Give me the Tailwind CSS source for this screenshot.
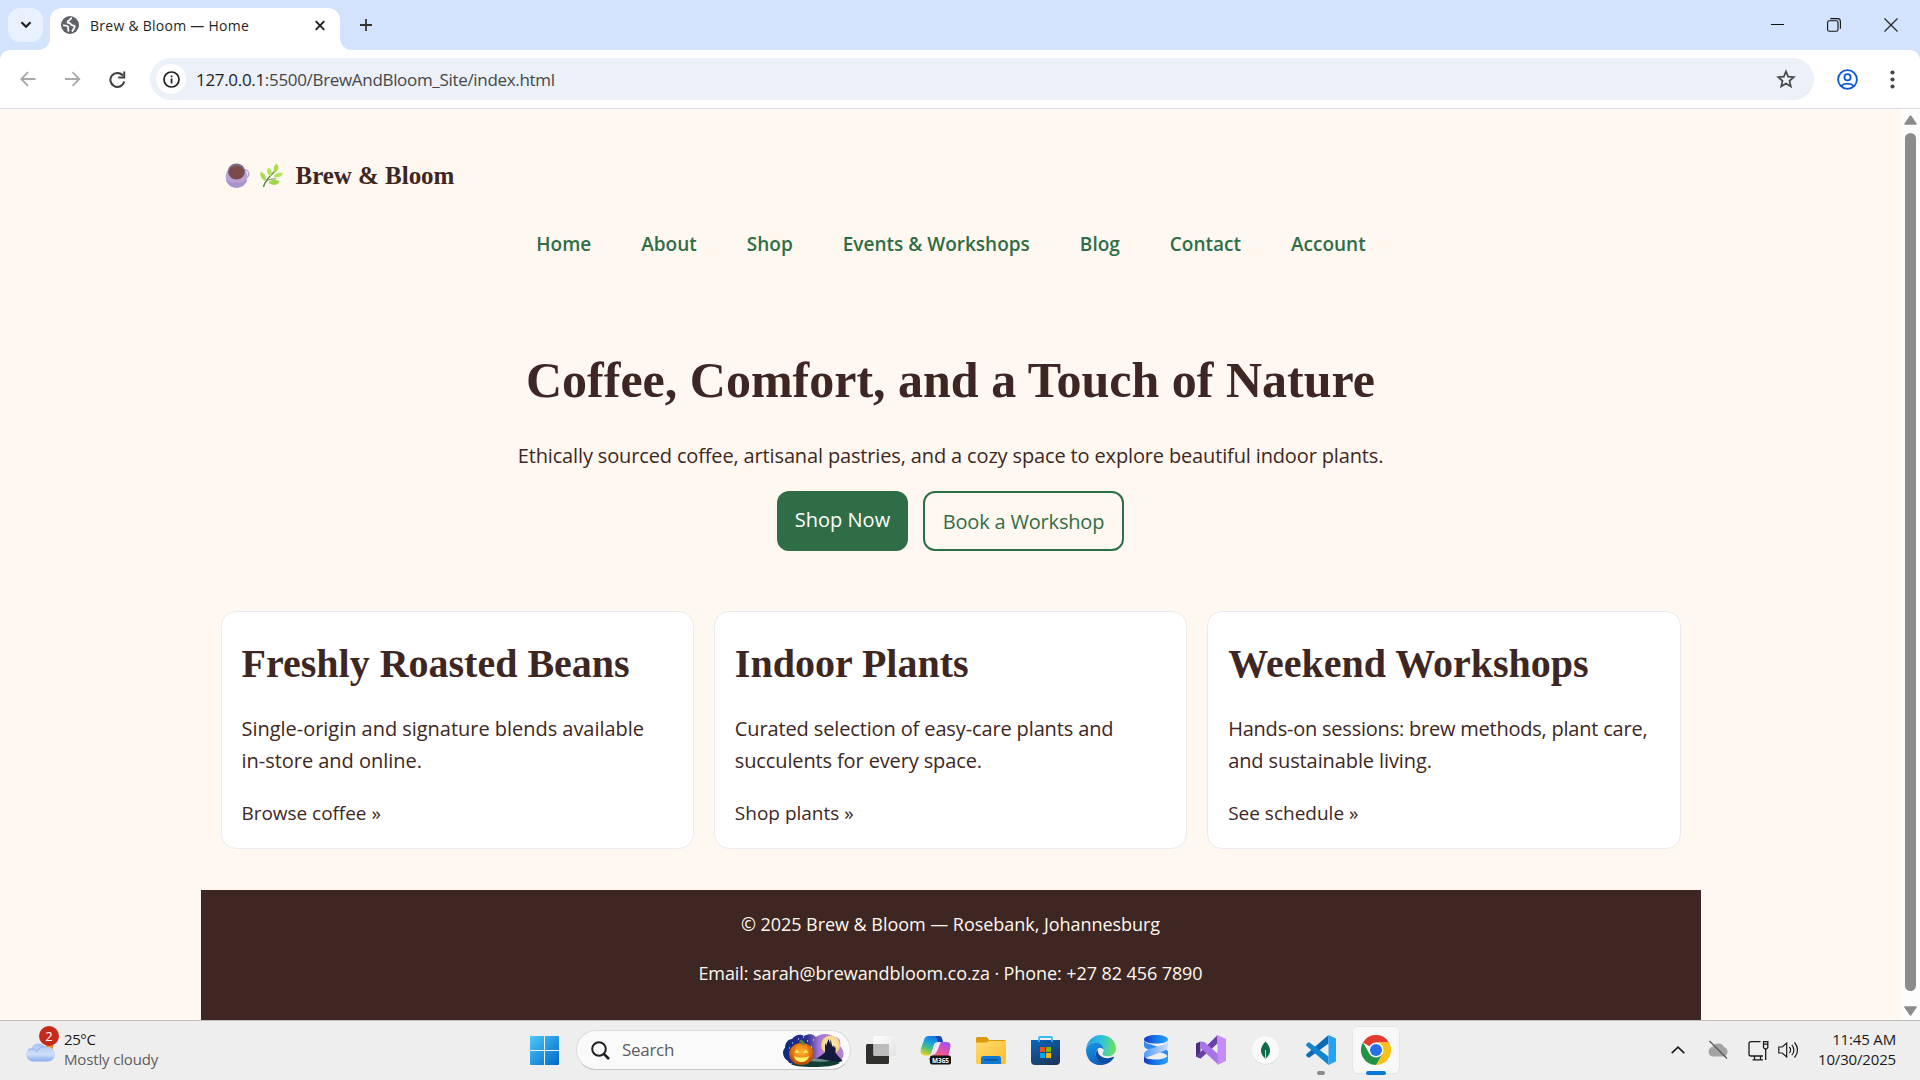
<!DOCTYPE html>
<html lang="en">
<head>
<meta charset="utf-8">
<title>Brew &amp; Bloom — Home</title>
<script src="https://cdn.jsdelivr.net/npm/@tailwindcss/browser@4"></script>
</head>
<body class="h-[1080px] w-[1920px] overflow-hidden flex flex-col bg-[#fff8f0] font-['Open_Sans','Noto_Sans',sans-serif] text-[#3e2723]">

<!-- Tab strip -->
<div class="h-[50px] shrink-0 bg-[#d3e3fd] flex items-end">
  <button class="ml-2 mb-2 w-[35px] h-[34px] rounded-xl bg-[#e9f1fe] flex items-center justify-center">
    <svg width="12" height="8" viewBox="0 0 12 8" fill="none" stroke="#1f1f1f" stroke-width="2.2"><path d="M1.5 1.3 6 5.8l4.500-4.500"/></svg>
  </button>
  <div class="relative ml-[7px] w-[290px] h-[42px] rounded-t-xl bg-white flex items-center pl-[11px] pr-[15px] pb-[1px]">
    <svg class="absolute -left-3 bottom-0" width="12" height="12" viewBox="0 0 12 12"><path d="M12 0v12H0A12 12 0 0 0 12 0" fill="#fff"/></svg>
    <svg class="absolute -right-3 bottom-0" width="12" height="12" viewBox="0 0 12 12"><path d="M0 0v12h12A12 12 0 0 1 0 0" fill="#fff"/></svg>
    <svg class="mt-[-7px]" width="18" height="18" viewBox="0 0 18 18"><circle cx="9" cy="9" r="9" fill="#5f6368"/><path d="M11 2.200C8.500 2.300 9.600 4.300 7.800 4.600 6.200 4.900 6.200 6.800 8 7c2.400.3 1.500 2.400 3.600 2.400 2.200 0 2.700 1.300 1.500 2.800-.9 1.200-.9 2.400-2.300 3.200M2 9.300c2-.1 4.200.1 5 1.200.8 1.200-.6 1.700.2 2.700.7.900.3 1.500-.2 2.200" fill="none" stroke="#fff" stroke-width="1.800"/></svg>
    <span class="ml-[11px] mt-[-5px] text-[14px] leading-5 tracking-[.26px] text-[#1f1f1f] whitespace-nowrap">Brew &amp; Bloom — Home</span>
    <svg class="ml-auto mt-[-7px]" width="10" height="11" viewBox="0 0 10 11" stroke="#1f1f1f" stroke-width="1.900"><path d="m.7 1.200 8.600 8.600m0-8.600L.7 9.800"/></svg>
  </div>
  <svg class="ml-5 mb-[19px]" width="12" height="12" viewBox="0 0 12 12" stroke="#333" stroke-width="1.800"><path d="M6 0v12M0 6h12"/></svg>
  <div class="ml-auto mr-[22px] mb-[18px] flex items-center gap-[43px]">
    <svg class="-mr-[1px]" width="14" height="14" viewBox="0 0 14 14" stroke="#111" stroke-width="1"><path d="M0 6.500h13"/></svg>
    <svg width="14" height="14" viewBox="0 0 14 14" fill="none" stroke="#111" stroke-width="1.100"><rect x=".6" y="2.800" width="10.400" height="10.400" rx="1.800"/><path d="M3.300.6h7.200a2.900 2.900 0 0 1 2.900 2.900v7.200"/></svg>
    <svg width="14" height="14" viewBox="0 0 14 14" stroke="#222" stroke-width="1.200"><path d="m.5.5 13 13m0-13-13 13"/></svg>
  </div>
</div>

<!-- Toolbar -->
<div class="h-[59px] shrink-0 bg-[#d3e3fd]">
<div class="h-full rounded-t-[10px] bg-white border-b border-[#dcdee3] flex items-center">
  <svg class="ml-5" width="16" height="16" viewBox="0 0 16 16" fill="none" stroke="#a9a9a9" stroke-width="1.800"><path d="M15.500 8H1.500M8 1.200 1.300 8 8 14.800"/></svg>
  <svg class="ml-[29px]" width="16" height="16" viewBox="0 0 16 16" fill="none" stroke="#a9a9a9" stroke-width="1.800"><path d="M0 8h14M7.500 1.200 14.300 8l-6.800 6.800"/></svg>
  <svg class="ml-7" width="17" height="17" viewBox="0 0 17 17"><path d="M14 4.700A7 7 0 1 0 15.200 10.500" fill="none" stroke="#3c3c3c" stroke-width="2"/><path d="M16.200.5v6.900H9.300V5.500h5V.5z" fill="#3c3c3c"/></svg>
  <div class="ml-6 w-[1664px] h-[42px] rounded-full bg-[#ebf0f9] flex items-center pl-[6px] pr-[18px]">
    <span class="w-[30px] h-[30px] rounded-full bg-white flex items-center justify-center">
      <svg width="17" height="17" viewBox="0 0 17 17"><circle cx="8.500" cy="8.500" r="7.500" fill="none" stroke="#1f1f1f" stroke-width="1.700"/><path d="M7.700 7.500h1.700v5H7.700zm0-3h1.700v1.700H7.700z" fill="#1f1f1f"/></svg>
    </span>
    <span class="ml-[10px] mt-[2px] text-[17px] tracking-[-.32px] leading-6 text-[#474747] whitespace-nowrap"><span class="text-[#1f1f1f]">127.0.0.1</span>:5500/BrewAndBloom_Site/index.html</span>
    <svg class="ml-auto" width="20" height="20" viewBox="0 0 20 20"><path d="m10 2.500 2.200 5.200 5.600.5-4.300 3.700 1.300 5.500-4.800-2.900-4.800 2.900 1.300-5.500-4.300-3.700 5.600-.5z" fill="none" stroke="#474747" stroke-width="1.700"/></svg>
  </div>
  <svg class="ml-[23px]" width="21" height="21" viewBox="0 0 21 21" fill="none" stroke="#0b57d0" stroke-width="1.800"><circle cx="10.500" cy="10.500" r="9.400"/><circle cx="10.500" cy="8.300" r="3.100"/><path d="M4 17.100c3.300-3.300 9.700-3.300 13 0"/></svg>
  <svg class="ml-8" width="5" height="19" viewBox="0 0 5 19" fill="#474747"><circle cx="2.500" cy="2.500" r="2.100"/><circle cx="2.500" cy="9.500" r="2.100"/><circle cx="2.500" cy="16.500" r="2.100"/></svg>
</div>
</div>

<!-- Page viewport -->
<div class="h-[911px] shrink-0 flex">
  <div class="w-[1901px] flex justify-center overflow-hidden">
    <div class="w-[1500px]">
      <header class="px-5 pt-[47px]">
        <div class="h-10 flex items-center pl-1">
          <svg class="mb-[1px]" width="25" height="25" viewBox="0 0 25 25">
            <circle cx="19.500" cy="11" r="4.200" fill="none" stroke="#b9a6cd" stroke-width="1.600"/>
            <ellipse cx="11.500" cy="14" rx="10.800" ry="10.800" fill="#b7a2d2"/>
            <path d="M1 17c2 5.500 6 7.500 10.500 7.500S20.500 22.500 22 17c-5 4-16 4-21 0" fill="#a894c8"/>
            <ellipse cx="11.500" cy="8.300" rx="8.700" ry="7.900" fill="#7b6a8b"/>
            <ellipse cx="11.500" cy="9.600" rx="7.700" ry="6.900" fill="#7d4a4c"/>
          </svg>
          <svg class="ml-[10px] mb-[1px]" width="23" height="25" viewBox="0 0 24 25">
            <path d="M3.500 24.500C5 19 9 14 15.500 8" fill="none" stroke="#5b8a3c" stroke-width="1.500"/>
            <path d="M6.800 18c3-1.500 6-2 10-2" fill="none" stroke="#5b8a3c"/>
            <path d="M17.500 0c2.800 3.500 2 7-2 9.500-2.300-3.500-1.300-7 2-9.500" fill="#a8dc50"/>
            <path d="M8.500 4.200c4 1.800 4.800 5 2.500 9-3.800-2-4.500-5.500-2.500-9" fill="#b4e460"/>
            <path d="M.8 8.600c4.500 1.800 6 5 5 10C1.300 16.200-.5 13 .8 8.600" fill="#a8dc50"/>
            <path d="M24 10c-1 4.300-5 5.700-10 3.500C16 9.900 19.500 8.800 24 10" fill="#b4e460"/>
            <path d="M20.500 19c-2.500 4-7 4.200-11.500 1 2.800-3.600 7.500-4 11.500-1" fill="#9fd648"/>
          </svg>
          <span class="ml-[13px] font-['Liberation_Serif',serif] font-bold text-[25px] leading-10 tracking-[-.03px] whitespace-nowrap">Brew &amp; Bloom</span>
        </div>
        <nav class="mt-8 flex justify-center gap-[50px] pl-[1px] text-[19px] leading-8 font-semibold text-[#2f6d46] whitespace-nowrap">
          <a>Home</a><a>About</a><a>Shop</a><a>Events &amp; Workshops</a><a>Blog</a><a>Contact</a><a>Account</a>
        </nav>
      </header>
      <section class="mt-20 text-center">
        <h1 class="font-['Liberation_Serif',serif] font-bold text-[50px] leading-20">Coffee, Comfort, and a Touch of Nature</h1>
        <p class="mt-5 text-[20px] leading-8 tracking-[-.145px]">Ethically sourced coffee, artisanal pastries, and a cozy space to explore beautiful indoor plants.</p>
        <div class="mt-[19px] flex justify-center gap-[15px] text-[20px] leading-8 whitespace-nowrap">
          <a class="w-[131px] h-[60px] pt-[13px] rounded-xl bg-[#2f6d46] text-white">Shop Now</a>
          <a class="w-[201px] h-[60px] pt-[13px] rounded-xl border-2 border-[#2f6d46] text-[#2f6d46] tracking-[-.183px]">Book a Workshop</a>
        </div>
      </section>
      <section class="mt-[60px] px-5 grid grid-cols-3 gap-5">
        <article class="h-[238px] p-5 rounded-[15px] bg-white border border-[#e9ebee]">
          <h2 class="font-['Liberation_Serif',serif] font-bold text-[40px] leading-16">Freshly Roasted Beans</h2>
          <p class="mt-[17px] text-[20px] leading-8 tracking-[-.03px]">Single-origin and signature blends available<br>in-store and online.</p>
          <a class="mt-5 block text-[19px] leading-8 tracking-[-.04px]">Browse coffee »</a>
        </article>
        <article class="h-[238px] p-5 rounded-[15px] bg-white border border-[#e9ebee]">
          <h2 class="font-['Liberation_Serif',serif] font-bold text-[40px] leading-16">Indoor Plants</h2>
          <p class="mt-[17px] text-[20px] leading-8 tracking-[-.13px]">Curated selection of easy-care plants and<br>succulents for every space.</p>
          <a class="mt-5 block text-[19px] leading-8">Shop plants »</a>
        </article>
        <article class="h-[238px] p-5 rounded-[15px] bg-white border border-[#e9ebee]">
          <h2 class="font-['Liberation_Serif',serif] font-bold text-[40px] leading-16">Weekend Workshops</h2>
          <p class="mt-[17px] text-[20px] leading-8 tracking-[-.22px] whitespace-nowrap">Hands-on sessions: brew methods, plant care,<br><span class="tracking-[-.1px]">and sustainable living.</span></p>
          <a class="mt-5 block text-[19px] leading-8">See schedule »</a>
        </article>
      </section>
      <footer class="mt-[41px] h-[130px] pt-[19px] bg-[#3e2723] text-[#fff8f0] text-center text-[18px] leading-[30px]">
        <p class="tracking-[-.04px]">© 2025 Brew &amp; Bloom — Rosebank, Johannesburg</p>
        <p class="mt-[19px] tracking-[-.085px]">Email: sarah@brewandbloom.co.za · Phone: +27 82 456 7890</p>
      </footer>
    </div>
  </div>
  <div class="w-[19px] bg-[#fcfcfc] flex flex-col items-center">
    <svg class="mt-[6px]" width="13" height="10" viewBox="0 0 13 10"><path d="M6.500 1 12 9H1z" fill="#8b8b8b" stroke="#8b8b8b" stroke-width="1.500" stroke-linejoin="round"/></svg>
    <div class="mt-2 w-[11px] h-[858px] rounded-full bg-[#8b8b8b]"></div>
    <svg class="mt-[15px]" width="13" height="10" viewBox="0 0 13 10"><path d="M6.500 9 12 1H1z" fill="#8b8b8b" stroke="#8b8b8b" stroke-width="1.500" stroke-linejoin="round"/></svg>
  </div>
</div>

<!-- Taskbar -->
<div class="h-[60px] shrink-0 border-t border-[#bdbdbd] bg-[#eee] flex items-center pb-[1px]">
  <div class="w-[530px] flex items-center pl-[25px] text-[15px] leading-5">
    <div class="relative w-[30px] h-[22px] mt-[4px]">
      <svg width="30" height="22" viewBox="0 0 30 22">
        <defs><linearGradient id="cl" x1="0" y1="0" x2="0" y2="1"><stop stop-color="#a9c4f3"/><stop offset=".6" stop-color="#cfdff9"/><stop offset="1" stop-color="#86abec"/></linearGradient></defs>
        <rect x="21" y="1" width="7" height="9" rx="3" fill="#f58a1f"/>
        <path d="M8 20.500A8 7 0 0 1 6.500 7 8 8 0 0 1 20.500 6.500 7.200 7.200 0 1 1 23 20.500z" fill="url(#cl)"/>
        <path d="M3 9c4-2 7-1 9 1.500 2-4 6-5.500 10-4.500" fill="none" stroke="#9ab9ef" stroke-width="1.200"/>
      </svg>
      <span class="absolute left-[14px] -top-[15px] w-5 h-5 rounded-full bg-[#c42b1c] text-white text-[13px] leading-5 text-center">2</span>
    </div>
    <div class="ml-[9px] mb-[2px]">
      <div class="text-[#1b1b1b] tracking-[-.4px]">25°C</div>
      <div class="text-[#5d5d5d] tracking-[-.15px]">Mostly cloudy</div>
    </div>
  </div>
  <svg width="29" height="29" viewBox="0 0 29 29"><defs><linearGradient id="wn" x1="0" y1="0" x2="1" y2="1"><stop stop-color="#4cc9fb"/><stop offset="1" stop-color="#0067c8"/></linearGradient></defs><path d="M1 0h13v14H0V1a1 1 0 0 1 1-1m14 0h13a1 1 0 0 1 1 1v13H15zM0 15h14v14H1a1 1 0 0 1-1-1zm15 0h14v13a1 1 0 0 1-1 1H15z" fill="url(#wn)"/></svg>
  <div class="ml-[17px] w-[275px] h-[40px] rounded-full bg-[#fafafa] border border-[#dcdcdc] border-b-[#c4c4c4] flex items-center pl-[14px] pr-[5px]">
    <svg width="19" height="19" viewBox="0 0 19 19" fill="none" stroke="#1f1f1f" stroke-width="2"><circle cx="8" cy="8" r="6.800"/><path d="m12.800 12.800 5.200 5.200" stroke-width="2.600"/></svg>
    <span class="ml-[12px] text-[17px] tracking-[-.3px] leading-6 text-[#5d5d5d]">Search</span>
    <svg class="ml-auto" width="62" height="33" viewBox="0 0 62 33">
      <defs>
        <linearGradient id="sky"><stop stop-color="#0b2a7e"/><stop offset=".4" stop-color="#2b2f8f"/><stop offset=".6" stop-color="#a879d0"/><stop offset="1" stop-color="#b884d2"/></linearGradient>
        <radialGradient id="pk" cx=".5" cy=".4"><stop stop-color="#ffb52e"/><stop offset=".7" stop-color="#ee7f14"/><stop offset="1" stop-color="#b94d08"/></radialGradient>
        <radialGradient id="mn"><stop stop-color="#fff3c4"/><stop offset="1" stop-color="#f3cf86"/></radialGradient>
      </defs>
      <path d="M5 27C-1 24-1 16 2 14c0-5 3-9 7-9 4-5 9-5 12-3 5-3 10-2 12 1 5-4 13-4 18 0 6 0 7 5 6 9 4 4 5 10 1 14-2 3-5 2-6 3-10 4-32 4-41 1-3-1-5 0-6-3" fill="url(#sky)"/>
      <circle cx="47.500" cy="11" r="9.500" fill="url(#mn)"/>
      <path d="M33 25c4-3 8-5 9-7v-7l1-2 1 3v-3l1.500-4 1.500 4v2l.7-6 1.200 6 .6 2 .8-2 .8 3 .5-2 1 2v5c2 3 5 5 7 8-6 3-21 3-27.600-2" fill="#141a3c"/>
      <path d="M8 30c8-5 42-5 49-1-6 3-14 4-27 4-12 0-20-1-22-3" fill="#123f35"/>
      <path d="M27 25c5-1 13 0 20 2-6 1-13 1-20 0" fill="#6f8f92"/>
      <ellipse cx="18.500" cy="20" rx="12.500" ry="11" fill="url(#pk)"/>
      <path d="M13 11c-4 5-4 13 0 18m11-18c4 5 4 13 0 18" stroke="#d4660e" fill="none"/>
      <path d="M18 11c1-2 0-3-2-3l1-2c3 0 5 2 4 5z" fill="#5b8a34"/>
      <path d="m11 18.500 3-3 2.500 3.500zm14.500 0-3-3-2.500 3.500zM11 22c4 2 11 2 15 0-1 4-4 6-7.500 6S12 26 11 22" fill="#fff06a"/>
      <path d="M6 14h1M15 5h1M24 7h1M28 13h1M20 3h1M30 6h1M9 9h1" stroke="#fff"/>
    </svg>
  </div>
  <div class="ml-[2px] flex h-full items-center">
    <!-- Task view -->
    <div class="w-[55px] flex justify-center"><svg width="30" height="28" viewBox="0 0 30 28"><defs><linearGradient id="tv" x1="0" y1="0" x2="1" y2="1"><stop stop-color="#fff"/><stop offset="1" stop-color="#e2e2e2"/></linearGradient></defs><rect y="8" width="23" height="20" rx="1.500" fill="#30302e"/><rect x="7.500" width="22.500" height="20" rx="1.500" fill="url(#tv)"/><path d="M7.500 8H23v12H9a1.500 1.500 0 0 1-1.500-1.500z" fill="#bcbcbc"/></svg></div>
    <!-- Microsoft 365 Copilot -->
    <div class="w-[55px] flex justify-center"><svg width="31" height="30" viewBox="0 0 31 30">
      <defs><linearGradient id="c1" x1=".6" y1="0" x2=".2" y2="1"><stop stop-color="#1b6ee0"/><stop offset=".35" stop-color="#1aa3e0"/><stop offset=".65" stop-color="#4fc27a"/><stop offset="1" stop-color="#f2d21f"/></linearGradient><linearGradient id="c2" x1=".7" y1="0" x2=".3" y2="1"><stop stop-color="#a34fe8"/><stop offset=".5" stop-color="#f0569b"/><stop offset="1" stop-color="#ff9a4a"/></linearGradient></defs>
      <path d="M9 1h10c3 0 3 3 4 6h-5c-3 0-4 2-5 6l-2 6c-1 1-2 1.500-4 1.500-6 0-7-2-6-7L4 5c1-3 2-4 5-4" fill="url(#c1)"/>
      <path d="M15 1h4c3 0 3 3 4 6h-5c-1-3-1-5-3-6" fill="#1748b0"/>
      <path d="M19 7h7c5 0 5 3 4 7l-2 8c-1 4-3 6-6 6H12c-2 0-3-2-3.500-5 4 0 4-2 5-5l2-7c1-3 2-4 3.500-4" fill="url(#c2)"/>
      <path d="M13.500 18l2-7c.7-2.500 1.700-4 3.500-4h2c-3 5-3 11-8 13z" fill="#f7e9f7"/>
      <rect x="10" y="20.500" width="21" height="9" rx="2" fill="#111"/><text x="20.500" y="27.700" text-anchor="middle" textLength="17" lengthAdjust="spacingAndGlyphs" font-family="Open Sans" font-weight="700" font-size="7.500" fill="#fff">M365</text></svg></div>
    <!-- File Explorer -->
    <div class="w-[55px] flex justify-center"><svg width="30" height="27" viewBox="0 0 30 27"><defs><linearGradient id="fo" x1="0" y1="0" x2="1" y2="1"><stop stop-color="#ffdb70"/><stop offset="1" stop-color="#fbbc2a"/></linearGradient></defs><path d="M1.500 0h8.500c1.500 0 2 1 3 3h15.500A1.500 1.500 0 0 1 30 4.500V10H0V1.500A1.500 1.500 0 0 1 1.500 0" fill="#dd9a08"/><path d="M0 5.500h10c1.500 0 2-1.500 3.500-1.500H30v21.500a1.500 1.500 0 0 1-1.500 1.500h-27A1.500 1.500 0 0 1 0 25.500z" fill="url(#fo)"/><path d="M5 27v-5.500A2.500 2.500 0 0 1 7.500 19h15a2.500 2.500 0 0 1 2.500 2.500V27z" fill="#1277cf"/><path d="M8.500 22.800h13" stroke="#0a4a8c" stroke-width="1.200"/></svg></div>
    <!-- Microsoft Store -->
    <div class="w-[55px] flex justify-center"><svg width="29" height="29" viewBox="0 0 29 29"><defs><linearGradient id="st" x1=".2" y1="0" x2=".8" y2="1"><stop stop-color="#0c63b4"/><stop offset="1" stop-color="#1f3358"/></linearGradient></defs><path d="M8 6V2a1 1 0 0 1 1-1h11a1 1 0 0 1 1 1v4" fill="none" stroke="#35bdf2" stroke-width="1.800"/><path d="M0 4h29v21a4 4 0 0 1-4 4H4a4 4 0 0 1-4-4z" fill="url(#st)"/><path d="M8 6V4m13 2V4" stroke="#35bdf2" stroke-width="1.500"/><path d="M9 11h5v5H9z" fill="#f25022"/><path d="M15 11h5v5h-5z" fill="#7fba00"/><path d="M9 17h5v5H9z" fill="#00a4ef"/><path d="M15 17h5v5h-5z" fill="#ffb900"/></svg></div>
    <!-- Edge -->
    <div class="w-[55px] flex justify-center"><svg width="30" height="30" viewBox="0 0 24 24">
      <defs><linearGradient id="e1" x1="0" y1=".3" x2="1" y2=".4"><stop stop-color="#1b9de2"/><stop offset=".5" stop-color="#2fc2df"/><stop offset="1" stop-color="#6be25a"/></linearGradient><linearGradient id="e2" x1="0" y1="0" x2=".5" y2="1"><stop stop-color="#1a9be6"/><stop offset="1" stop-color="#0b5fc0"/></linearGradient></defs>
      <path d="M0 11.500C.5 5 5.500 0 12 0c7 0 12 5 12 10.500 0 4-3 6.500-6.500 6.500-3 0-4.500-1.300-4.300-2.300.1-.6 1-.9 1-2.700C14 8 10 5.800 6.500 5.800 3 5.800.5 8.500 0 11.500" fill="url(#e1)"/>
      <path d="M0 12C.3 8.500 3.500 5.800 7 5.800c4 0 7.200 2.700 7.200 6.200-1-2-4.500-3-6 .8C6.500 17.500 10 23 15.500 23.400 8 26 0 21 0 12" fill="url(#e2)"/>
      <path d="M9.300 11c-3.300 4.500-1 12 6.200 12.400 3-.9 5.500-2.800 6.800-5.200.3-.6-.2-.9-.8-.6-5 2.300-12.700.4-12.200-6.600" fill="#0d4f9e"/></svg></div>
    <!-- SQL client -->
    <div class="w-[55px] flex justify-center"><svg width="24" height="30" viewBox="0 0 24 30"><defs><linearGradient id="s1"><stop stop-color="#1a35c8"/><stop offset=".5" stop-color="#1479e8"/><stop offset="1" stop-color="#2aa0f5"/></linearGradient><linearGradient id="s2"><stop stop-color="#4f9bf8"/><stop offset="1" stop-color="#d0dcff"/></linearGradient></defs>
      <path d="M0 5v5c0 3 3 4.500 8 5.500l9 2c4 1 7 2.500 7 5.500V17c0-2-3-3-7-4L7 9.500C3 8.500 0 7 0 5" fill="#2a8cf0"/>
      <path d="M24 5.500V12c0 2.500-3 3.500-7 5l-9 3.500C4 22 0 22.500 0 25v-5.500c0-3 3-4.500 7-6l10-3c4-1.200 7-2.500 7-5" fill="url(#s2)"/>
      <path d="M0 4.500C0 2 5 0 12 0s12 2 12 4.500S19 8.500 12 8.500 0 7 0 4.500" fill="url(#s1)"/>
      <path d="M0 21c0 2.500 6 3.500 12 3.500S24 23 24 19.500V26c0 2.500-5 4-12 4S0 28.500 0 26z" fill="url(#s1)"/></svg></div>
    <!-- Visual Studio -->
    <div class="w-[55px] flex justify-center"><svg width="30" height="30" viewBox="0 0 30 30"><path d="M0 8.500 4.500 6.500v17L0 21.500z" fill="#4b2d80"/><path d="M0 21.500 21.500 0v8.500L7 21.500l-2.500 2z" fill="#6a3fa8"/><path d="m4.500 6.500 4 .5L22 19v10.500L4.500 13z" fill="#a874e6"/><path d="M21.500 0 30 4v22l-8.500 4z" fill="#c48cf8"/></svg></div>
    <!-- MongoDB Compass -->
    <div class="w-[55px] flex justify-center"><svg width="29" height="29" viewBox="0 0 29 29"><circle cx="14.500" cy="14.900" r="13.800" fill="#dedede"/><circle cx="14.500" cy="14.200" r="13.700" fill="#fafafa"/><path d="M14.500 5.500c6 6 6 12 .4 17h-.8c-5.600-5-5.600-11 .4-17" fill="#0f6b4b"/><path d="M14.500 14v10" stroke="#bcd9cc" stroke-width="1"/></svg></div>
    <!-- VS Code -->
    <div class="relative h-full w-[55px] flex items-center justify-center"><svg width="30" height="30" viewBox="0 0 30 30"><path d="M22.500 0v8.500L3.500 22.500H2L.3 20.700v-1.500z" fill="#0a6ab5"/><path d="M22.500 30v-8.500L3.500 7.500H2L.3 9.300v1.500z" fill="#0f86d2"/><path d="M22.500 0 30 3.500v23L22.500 30z" fill="#27a2f0"/></svg><span class="absolute bottom-[4px] left-1/2 -ml-1 w-2 h-1 rounded-full bg-[#8a8a8a]"></span></div>
    <!-- Chrome -->
    <div class="relative h-full w-[55px] flex items-center justify-center"><div class="w-12 h-12 rounded-md bg-[#f8f8f8] border border-[#e6e6e6] flex items-center justify-center"><svg width="30" height="30" viewBox="0 0 30 30"><path d="M15 15 2 7.500A15 15 0 0 1 28 7.500H15z" fill="#e33b2e"/><path d="M28 7.500A15 15 0 0 1 15 30l6.500-11.200L21.500 11 15 7.500z" fill="#fbc116"/><path d="M2 7.500A15 15 0 0 0 15 30l6.500-11.300L15 22l-6.500-3.200z" fill="#229342"/><circle cx="15" cy="15" r="7.500" fill="#fff"/><circle cx="15" cy="15" r="6" fill="#2a6ee8"/></svg></div><span class="absolute bottom-[4px] left-1/2 -ml-[10px] w-5 h-1 rounded-full bg-[#0a78d4]"></span></div>
  </div>
  <div class="ml-auto mr-[24px] flex items-center">
    <svg width="14" height="8" viewBox="0 0 14 8" fill="none" stroke="#1b1b1b" stroke-width="1.600"><path d="m.7 7.200 6.300-6 6.300 6"/></svg>
    <svg class="ml-[23px]" width="21" height="20" viewBox="0 0 21 20"><path d="M5 16.500a4.800 4.800 0 0 1-.5-9.500 6.500 6.500 0 0 1 11.500 0 5 5 0 0 1 0 9.500z" fill="#a3a3a3"/><path d="M1.500 1 19 18.500" stroke="#555" stroke-width="1.300"/></svg>
    <svg class="ml-[19px]" width="21" height="21" viewBox="0 0 21 21" fill="none" stroke="#1b1b1b" stroke-width="1.300"><path d="M12.500 1.600H3A2 2 0 0 0 1 3.600V14a2 2 0 0 0 2 2h12M6.500 16v3.500M12.500 16v3.500M4.500 19.800h10.500M15.500 1.600h4.300v6l-1.200 1.200h-1.900l-1.200-1.200zM15.500 4.200h4.300M17.700 9v11"/></svg>
    <svg class="ml-[9px]" width="21" height="18" viewBox="0 0 21 18" fill="none" stroke="#1b1b1b" stroke-width="1.200"><path d="M.8 6v6h3.400l4.500 4V2L4.200 6zM11.300 6c1.500 1.700 1.500 4.300 0 6M13.800 3.800c2.800 3 2.800 7.400 0 10.400M16.500 1.500c4 4.400 4 10.600 0 15"/></svg>
    <div class="ml-[19px] mb-[2px] w-[78px] text-right text-[15px] leading-5 tracking-[-.16px] text-[#1b1b1b] whitespace-nowrap">
      <div>11:45 AM</div><div>10/30/2025</div>
    </div>
  </div>
</div>
</body>
</html>
